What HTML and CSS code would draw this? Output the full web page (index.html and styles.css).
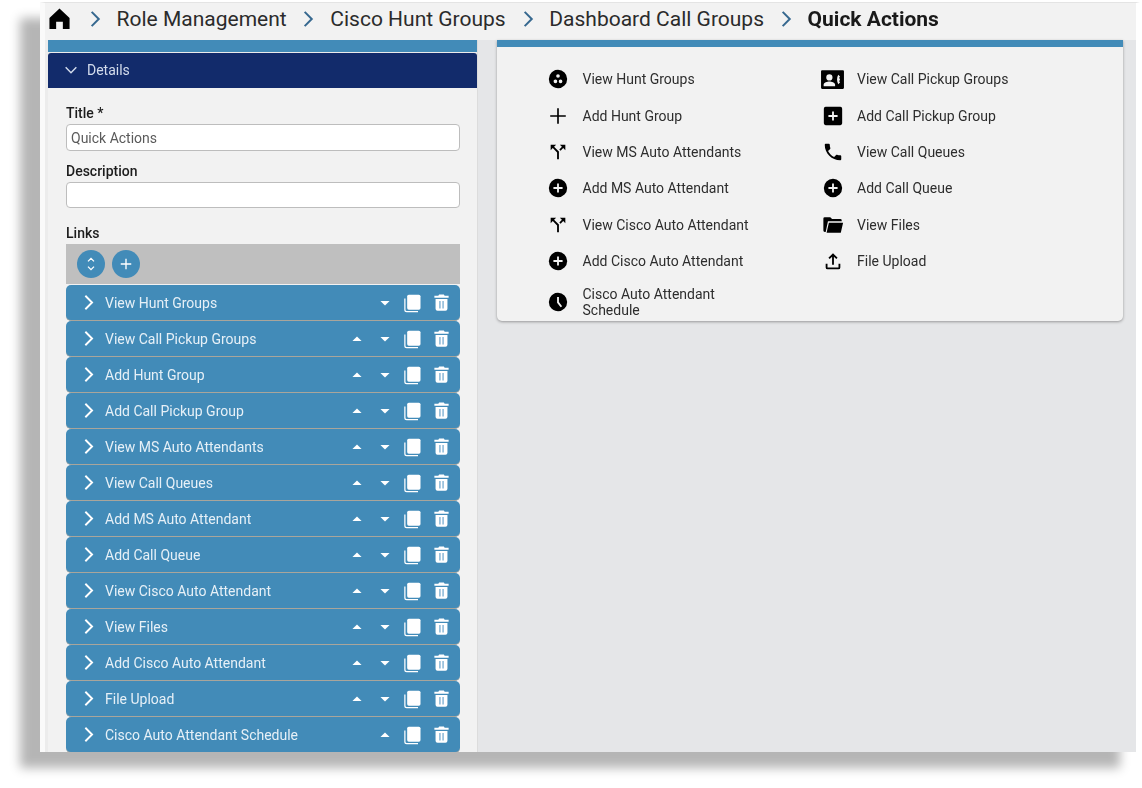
FILE: index.html
```html
<!DOCTYPE html>
<html lang="en">
<head>
<meta charset="utf-8">
<title>Quick Actions</title>
<link rel="stylesheet" href="styles.css">
</head>
<body>
<svg class="defs" width="0" height="0" aria-hidden="true">
  <symbol id="i-right" viewBox="0 0 24 24"><path d="M8 3.500 16.500 12 8 20.500" fill="none" stroke="currentColor" stroke-width="2.400"/></symbol>
  <symbol id="i-up" viewBox="0 0 24 24"><path d="M6.500 14.500 12 9l5.500 5.500z" fill="currentColor"/></symbol>
  <symbol id="i-down" viewBox="0 0 24 24"><path d="M6.500 9.500 12 15l5.500-5.500z" fill="currentColor"/></symbol>
  <symbol id="i-copy" viewBox="0 0 24 24"><path d="M7 2h12a2 2 0 0 1 2 2v14a2 2 0 0 1-2 2H7a2 2 0 0 1-2-2V4a2 2 0 0 1 2-2z" fill="currentColor"/><path d="M3 6.500H1.500V20A3 3 0 0 0 4.500 23H18V21.500H4.500A1.500 1.500 0 0 1 3 20z" fill="currentColor"/></symbol>
  <symbol id="i-trash" viewBox="0 0 24 24"><path d="M9 2h6l1 1.500h5V6H3V3.500h5zM4.500 7.500h15V20a2.500 2.500 0 0 1-2.500 2.500H7A2.500 2.500 0 0 1 4.500 20z" fill="currentColor"/><path d="M9 10h2v9.500H9zM13 10h2v9.500h-2z" fill="#8fbbd9"/></symbol>
  <symbol id="i-branch" viewBox="0 0 24 24"><path d="M14 4l2.290 2.290-2.880 2.880 1.420 1.420 2.880-2.880L20 10V4h-6zm-4 0H4v6l2.290-2.290 4.710 4.700V20h2v-8.410l-5.290-5.300L10 4z" fill="currentColor"/></symbol>
  <symbol id="i-plus-circle" viewBox="0 0 24 24"><path d="M12 2a10 10 0 1 0 0 20 10 10 0 0 0 0-20zm5 11h-4v4h-2v-4H7v-2h4V7h2v4h4z" fill="currentColor"/></symbol>
</svg>
<main class="window">
  <header class="crumbs">
    <svg class="home" viewBox="0 0 24 24"><path d="M12 1.500 1.500 11.500V23H8.500V15.500H15.500V23H22.500V11.500z" fill="currentColor"/></svg>
    <svg class="sep"><use href="#i-right"/></svg><span>Role Management</span>
    <svg class="sep"><use href="#i-right"/></svg><span>Cisco Hunt Groups</span>
    <svg class="sep"><use href="#i-right"/></svg><span>Dashboard Call Groups</span>
    <svg class="sep"><use href="#i-right"/></svg><strong>Quick Actions</strong>
  </header>
  <div class="content">
    <section class="editor">
      <div class="strip"></div>
      <div class="details-head">
        <svg viewBox="0 0 24 24"><path d="M4 8l8 8 8-8" fill="none" stroke="currentColor" stroke-width="2.200"/></svg>
        <span>Details</span>
      </div>
      <form class="form">
        <label class="lbl" for="f-title">Title *</label>
        <input id="f-title" class="field" value="Quick Actions">
        <label class="lbl lbl-desc" for="f-desc">Description</label>
        <input id="f-desc" class="field field-desc">
        <div class="lbl lbl-links">Links</div>
        <div class="toolbar">
          <button type="button" class="round"><svg viewBox="0 0 24 24"><path d="M8 8.500l4-4 4 4M8 15.500l4 4 4-4" fill="none" stroke="currentColor" stroke-width="1.800"/></svg></button>
          <button type="button" class="round"><svg viewBox="0 0 24 24"><path d="M12 5v14M5 12h14" fill="none" stroke="currentColor" stroke-width="1.800"/></svg></button>
        </div>
        <div class="links">
          <div class="link"><svg class="chev"><use href="#i-right"/></svg><span class="link-name">View Hunt Groups</span><svg class="arrow"><use href="#i-down"/></svg><svg class="copy"><use href="#i-copy"/></svg><svg class="trash"><use href="#i-trash"/></svg></div>
          <div class="link"><svg class="chev"><use href="#i-right"/></svg><span class="link-name">View Call Pickup Groups</span><svg class="arrow"><use href="#i-up"/></svg><svg class="arrow"><use href="#i-down"/></svg><svg class="copy"><use href="#i-copy"/></svg><svg class="trash"><use href="#i-trash"/></svg></div>
          <div class="link"><svg class="chev"><use href="#i-right"/></svg><span class="link-name">Add Hunt Group</span><svg class="arrow"><use href="#i-up"/></svg><svg class="arrow"><use href="#i-down"/></svg><svg class="copy"><use href="#i-copy"/></svg><svg class="trash"><use href="#i-trash"/></svg></div>
          <div class="link"><svg class="chev"><use href="#i-right"/></svg><span class="link-name">Add Call Pickup Group</span><svg class="arrow"><use href="#i-up"/></svg><svg class="arrow"><use href="#i-down"/></svg><svg class="copy"><use href="#i-copy"/></svg><svg class="trash"><use href="#i-trash"/></svg></div>
          <div class="link"><svg class="chev"><use href="#i-right"/></svg><span class="link-name">View MS Auto Attendants</span><svg class="arrow"><use href="#i-up"/></svg><svg class="arrow"><use href="#i-down"/></svg><svg class="copy"><use href="#i-copy"/></svg><svg class="trash"><use href="#i-trash"/></svg></div>
          <div class="link"><svg class="chev"><use href="#i-right"/></svg><span class="link-name">View Call Queues</span><svg class="arrow"><use href="#i-up"/></svg><svg class="arrow"><use href="#i-down"/></svg><svg class="copy"><use href="#i-copy"/></svg><svg class="trash"><use href="#i-trash"/></svg></div>
          <div class="link"><svg class="chev"><use href="#i-right"/></svg><span class="link-name">Add MS Auto Attendant</span><svg class="arrow"><use href="#i-up"/></svg><svg class="arrow"><use href="#i-down"/></svg><svg class="copy"><use href="#i-copy"/></svg><svg class="trash"><use href="#i-trash"/></svg></div>
          <div class="link"><svg class="chev"><use href="#i-right"/></svg><span class="link-name">Add Call Queue</span><svg class="arrow"><use href="#i-up"/></svg><svg class="arrow"><use href="#i-down"/></svg><svg class="copy"><use href="#i-copy"/></svg><svg class="trash"><use href="#i-trash"/></svg></div>
          <div class="link"><svg class="chev"><use href="#i-right"/></svg><span class="link-name">View Cisco Auto Attendant</span><svg class="arrow"><use href="#i-up"/></svg><svg class="arrow"><use href="#i-down"/></svg><svg class="copy"><use href="#i-copy"/></svg><svg class="trash"><use href="#i-trash"/></svg></div>
          <div class="link"><svg class="chev"><use href="#i-right"/></svg><span class="link-name">View Files</span><svg class="arrow"><use href="#i-up"/></svg><svg class="arrow"><use href="#i-down"/></svg><svg class="copy"><use href="#i-copy"/></svg><svg class="trash"><use href="#i-trash"/></svg></div>
          <div class="link"><svg class="chev"><use href="#i-right"/></svg><span class="link-name">Add Cisco Auto Attendant</span><svg class="arrow"><use href="#i-up"/></svg><svg class="arrow"><use href="#i-down"/></svg><svg class="copy"><use href="#i-copy"/></svg><svg class="trash"><use href="#i-trash"/></svg></div>
          <div class="link"><svg class="chev"><use href="#i-right"/></svg><span class="link-name">File Upload</span><svg class="arrow"><use href="#i-up"/></svg><svg class="arrow"><use href="#i-down"/></svg><svg class="copy"><use href="#i-copy"/></svg><svg class="trash"><use href="#i-trash"/></svg></div>
          <div class="link"><svg class="chev"><use href="#i-right"/></svg><span class="link-name">Cisco Auto Attendant Schedule</span><svg class="arrow"><use href="#i-up"/></svg><svg class="copy"><use href="#i-copy"/></svg><svg class="trash"><use href="#i-trash"/></svg></div>
        </div>
      </form>
    </section>
    <section class="preview">
      <div class="card">
        <ul class="actions">
          <li><svg viewBox="0 0 24 24"><path fill-rule="evenodd" d="M12 2a10 10 0 1 0 0 20 10 10 0 0 0 0-20zM12 6.700a2 2 0 1 1 0 4 2 2 0 0 1 0-4zM9.200 12.500a2 2 0 1 1 0 4 2 2 0 0 1 0-4zM14.800 12.500a2 2 0 1 1 0 4 2 2 0 0 1 0-4z" fill="currentColor"/></svg><span>View Hunt Groups</span></li>
          <li><svg class="wide" viewBox="0 0 24 24"><path fill-rule="evenodd" d="M2 3h20a1 1 0 0 1 1 1v16a1 1 0 0 1-1 1H2a1 1 0 0 1-1-1V4a1 1 0 0 1 1-1zM9 7a3 3 0 1 0 0 6 3 3 0 0 0 0-6zM3.500 18.500h11V17c0-2-3.500-3-5.500-3s-5.500 1-5.500 3zM17.500 7.500c-1.500 3-1.500 6 0 9l1.700-1.600-1-1.600.9-.3V11l-.9-.3 1-1.600z" fill="currentColor"/></svg><span>View Call Pickup Groups</span></li>
          <li><svg viewBox="0 0 24 24"><path d="M12 3.500v17M3.500 12h17" fill="none" stroke="currentColor" stroke-width="1.800"/></svg><span>Add Hunt Group</span></li>
          <li><svg viewBox="0 0 24 24"><path fill-rule="evenodd" d="M4 2h16a2 2 0 0 1 2 2v16a2 2 0 0 1-2 2H4a2 2 0 0 1-2-2V4a2 2 0 0 1 2-2zm9 5h-2v4H7v2h4v4h2v-4h4v-2h-4z" fill="currentColor"/></svg><span>Add Call Pickup Group</span></li>
          <li><svg><use href="#i-branch"/></svg><span>View MS Auto Attendants</span></li>
          <li><svg viewBox="0 0 24 24"><path d="M6.600 10.800c1.400 2.800 3.800 5.100 6.600 6.600l2.200-2.200c.3-.3.700-.4 1-.2 1.100.4 2.300.6 3.600.6.600 0 1 .4 1 1V20c0 .6-.4 1-1 1C10.600 21 3 13.400 3 4c0-.6.400-1 1-1h3.500c.6 0 1 .4 1 1 0 1.300.2 2.500.6 3.600.1.300 0 .7-.2 1z" fill="currentColor"/></svg><span>View Call Queues</span></li>
          <li><svg><use href="#i-plus-circle"/></svg><span>Add MS Auto Attendant</span></li>
          <li><svg><use href="#i-plus-circle"/></svg><span>Add Call Queue</span></li>
          <li><svg><use href="#i-branch"/></svg><span>View Cisco Auto Attendant</span></li>
          <li><svg viewBox="0 0 24 24"><path d="M1.500 5a1.500 1.500 0 0 1 1.500-1.500h6l2 2h9A1.500 1.500 0 0 1 21.500 7v1H6.500L4 19.500H3A1.500 1.500 0 0 1 1.500 18zM7.500 9.500H23L20.500 20.500H5z" fill="currentColor"/></svg><span>View Files</span></li>
          <li><svg><use href="#i-plus-circle"/></svg><span>Add Cisco Auto Attendant</span></li>
          <li><svg viewBox="0 0 24 24"><path d="M12 3.500 7 8.500l1.400 1.400 2.600-2.600V16h2V7.300l2.600 2.600L17 8.500zM4 15v4a2 2 0 0 0 2 2h12a2 2 0 0 0 2-2v-4h-2v4H6v-4z" fill="currentColor"/></svg><span>File Upload</span></li>
          <li class="tall"><svg viewBox="0 0 24 24"><path fill-rule="evenodd" d="M12 2a10 10 0 1 0 0 20 10 10 0 0 0 0-20zM11 6.500h2V12l3.500 4.500-1.600 1.200L11 12.700z" fill="currentColor"/></svg><span>Cisco Auto Attendant Schedule</span></li>
        </ul>
      </div>
    </section>
  </div>
</main>
</body>
</html>
```

FILE: styles.css
```css
* { box-sizing: border-box; }
html, body { height: 100%; }
body {
  margin: 0;
  background: #fff;
  font-family: Roboto, "Liberation Sans", sans-serif;
  overflow: hidden;
}
.defs { position: absolute; }
.window {
  width: 1100px;
  height: 750px;
  margin: 2px 0 0 40px;
  background: #e5e6e8;
  border-top: 1px solid #e4e4e4;
  border-left: 5px solid #fafafa;
  border-right: 4px solid #fff;
  box-shadow: -20px 16px 10px rgba(0, 0, 0, .29);
  overflow: hidden;
  display: flex;
  flex-direction: column;
  filter: blur(.3px);
}
.crumbs {
  height: 37px;
  flex: none;
  background: #f2f2f2;
  display: flex;
  align-items: center;
  padding: 0 0 6px 3px;
  font-size: 21px;
  color: #2b2b2b;
}
.crumbs strong { font-size: 21px; font-weight: 700; color: #1a1a1a; }
.home { width: 23px; height: 23px; color: #000; flex: none; margin-right: 2px; }
.sep { width: 20px; height: 20px; color: #36688f; margin: 0 11.800px; flex: none; }
.content { flex: 1; display: flex; min-height: 0; }
.editor {
  width: 433px;
  flex: none;
  padding-left: 3px;
  background: #ececec;
  border-right: 1px solid #dcdcdc;
}
.strip { height: 12px; background: #428bb8; }
.details-head {
  height: 35px;
  margin-top: 1px;
  background: #122b6b;
  color: #d3dcec;
  border-radius: 3px 3px 0 0;
  display: flex;
  align-items: center;
  padding: 0 0 2px 15px;
  font-size: 14px;
}
.details-head svg { width: 16px; height: 16px; margin-right: 8px; }
.form { background: #f2f2f2; padding: 16px 17px 0 18px; height: 700px; }
.lbl { display: block; font-size: 14px; font-weight: 500; color: #1c1c1c; line-height: 18px; }
.lbl-desc { margin-top: 11px; }
.lbl-links { margin-top: 16px; }
.field {
  display: block;
  width: 100%;
  height: 27px;
  margin-top: 2px;
  border: 1px solid #bdbdbd;
  border-radius: 4px;
  background: #fff;
  font: 14px Roboto, "Liberation Sans", sans-serif;
  color: #5a5a5a;
  padding: 0 4px;
}
.field-desc { height: 26px; }
.toolbar {
  height: 40px;
  margin-top: 2px;
  background: #bfbfbf;
  display: flex;
  align-items: center;
  gap: 7px;
  padding-left: 11px;
}
.round {
  width: 28px;
  height: 28px;
  padding: 5px;
  border: 0;
  border-radius: 50%;
  background: #428bb8;
  color: #fff;
}
.round svg { display: block; width: 18px; height: 18px; }
.links { margin-top: 1px; }
.link {
  height: 36px;
  background: #428bb8;
  color: #e6f0f7;
  border-radius: 5px;
  border-bottom: 1px solid #a9a59b;
  display: flex;
  align-items: center;
  padding: 0 9px 0 13px;
  font-size: 14px;
}
.chev { width: 19px; height: 19px; margin-right: 7px; color: #fff; flex: none; }
.link-name { flex: 1; }
.arrow { width: 20px; height: 20px; color: #fff; margin-left: 8px; flex: none; }
.copy { width: 20px; height: 20px; color: #fff; margin-left: 8px; flex: none; }
.trash { width: 19px; height: 19px; color: #fff; margin-left: 9px; flex: none; }
.preview { flex: 1; padding-left: 19px; min-width: 0; }
.card {
  width: 626px;
  height: 281px;
  background: #f2f2f2;
  border-top: 7px solid #428bb8;
  border-radius: 0 0 5px 5px;
  box-shadow: 0 1px 3px rgba(0, 0, 0, .35);
  padding: 14px 0 0 50px;
}
.actions {
  list-style: none;
  margin: 0;
  padding: 0;
  display: grid;
  grid-template-columns: 274.5px 260px;
  grid-auto-rows: 36.35px;
}
.actions li {
  display: flex;
  align-items: center;
  gap: 13.5px;
  font-size: 14px;
  line-height: 16px;
  color: #2d2d2d;
}
.actions li.tall { height: 32px; margin-top: 7px; }
.actions svg { width: 22px; height: 22px; color: #000; flex: none; }
.actions svg.wide { width: 25px; height: 25px; margin: 0 -1.500px; }
.actions span { max-width: 175px; }
```
